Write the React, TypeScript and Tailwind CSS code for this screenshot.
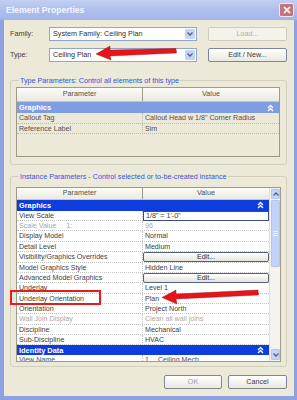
import React from "react";

const FONT = { fontFamily: '"Liberation Sans", Arial, sans-serif' };

const Chevrons: React.FC<{ color?: string }> = ({ color = "#ffffff" }) => (
  <svg width="7" height="8" viewBox="0 0 7 8">
    <path d="M1 4 L3.5 1.5 L6 4" stroke={color} strokeWidth="1.3" fill="none" />
    <path d="M1 7 L3.5 4.5 L6 7" stroke={color} strokeWidth="1.3" fill="none" />
  </svg>
);

const Combo: React.FC<{ text: string }> = ({ text }) => (
  <div className="flex h-[14px] w-[148px] border border-[#8fa6c6] bg-white">
    <div className="flex-1 pl-[3px] text-[7.2px] leading-[12px] text-[#303030]">{text}</div>
    <div className="m-[1px] flex w-[10px] items-center justify-center rounded-[1px] bg-[#c4d3f6]">
      <svg width="6" height="4" viewBox="0 0 6 4">
        <path d="M0.5 0.5 L3 3 L5.5 0.5" stroke="#4d6185" strokeWidth="1.3" fill="none" />
      </svg>
    </div>
  </div>
);

const Btn: React.FC<{ text: string; disabled?: boolean; w: string }> = ({ text, disabled, w }) => (
  <div
    className={`${w} flex h-[14px] items-center justify-center rounded-[2px] border text-[7.2px] ${
      disabled
        ? "border-[#cfccbd] bg-[#f3f2ec] text-[#b4b1a4]"
        : "border-[#7b8696] bg-gradient-to-b from-white to-[#eae8de] text-[#404040]"
    }`}
  >
    {text}
  </div>
);

type Row = { p: string; v?: string; extra?: string; dim?: boolean; btn?: boolean; box?: boolean };

const instanceRows: Row[] = [
  { p: "View Scale", v: "1/8\" = 1'-0\"", box: true },
  { p: "Scale Value", extra: "1:", v: "96", dim: true },
  { p: "Display Model", v: "Normal" },
  { p: "Detail Level", v: "Medium" },
  { p: "Visibility/Graphics Overrides", v: "Edit...", btn: true },
  { p: "Model Graphics Style", v: "Hidden Line" },
  { p: "Advanced Model Graphics", v: "Edit...", btn: true },
  { p: "Underlay", v: "Level 1" },
  { p: "Underlay Orientation", v: "Plan" },
  { p: "Orientation", v: "Project North" },
  { p: "Wall Join Display", v: "Clean all wall joins", dim: true },
  { p: "Discipline", v: "Mechanical" },
  { p: "Sub-Discipline", v: "HVAC" },
];

const Header: React.FC<{ h: string; cols: string }> = ({ h, cols }) => (
  <div className={`grid ${cols} ${h} border-b border-[#c9c6b6] bg-gradient-to-b from-[#fbfbf8] to-[#ebeadf] text-[7.2px] text-[#505050]`}>
    <div className="flex items-center justify-center border-r border-[#9a9889]">Parameter</div>
    <div className="flex items-center justify-center">Value</div>
  </div>
);

const GroupRow: React.FC<{ label: string; bg: string; h: string }> = ({ label, bg, h }) => (
  <div className={`flex ${h} items-center justify-between ${bg} pl-[2px] pr-[5px] text-[7.4px] font-bold text-white`}>
    <span>{label}</span>
    <Chevrons />
  </div>
);

export default function App() {
  return (
    <div className="relative flex h-[400px] w-[297px] flex-col bg-[#8ea2e2]" style={FONT}>
      {/* title bar */}
      <div className="flex h-[20px] items-center justify-between bg-gradient-to-b from-[#c3d0f2] via-[#aebfee] to-[#a3b5e8] pl-[6px] pr-[3px]">
        <span className="text-[8.6px] font-bold text-[#f4f6fc]">Element Properties</span>
        <div className="flex h-[14px] w-[15px] items-center justify-center rounded-[2px] border border-[#e8eaf4] bg-[#c9727a]">
          <svg width="8" height="8" viewBox="0 0 8 8">
            <path d="M1 1 L7 7 M7 1 L1 7" stroke="#ffffff" strokeWidth="1.7" />
          </svg>
        </div>
      </div>

      {/* body */}
      <div className="mb-[4px] ml-[4px] mr-[3px] flex flex-1 flex-col bg-[#ece9d8] pl-[6px] pr-[7px] text-[#404040]">
        <div className="mt-[7px] flex h-[14px] items-center">
          <span className="w-[39px] text-[7.2px]">Family:</span>
          <Combo text="System Family: Ceiling Plan" />
          <div className="ml-[11px]">
            <Btn text="Load..." disabled w="w-[79px]" />
          </div>
        </div>
        <div className="mt-[7px] flex h-[14px] items-center">
          <span className="w-[39px] text-[7.2px]">Type:</span>
          <Combo text="Ceiling Plan" />
          <div className="ml-[11px]">
            <Btn text="Edit / New..." w="w-[79px]" />
          </div>
        </div>

        {/* type parameters */}
        <fieldset className="mt-[14px] rounded-[3px] border border-[#d3d0bf] pb-[7px] pl-[5px] pr-[6px] pt-[2px]">
          <legend className="ml-[3px] px-[1px] text-[7.2px] leading-[9px] text-[#3653d8]">
            Type Parameters: Control all elements of this type
          </legend>
          <div className="h-[70px] w-[264px] border border-[#9c9a8c] bg-[#ece9d8]">
            <Header h="h-[14px]" cols="grid-cols-[126px_1fr]" />
            <GroupRow label="Graphics" bg="bg-[#7f9de2]" h="h-[11px]" />
            {[
              ["Callout Tag", "Callout Head w 1/8\" Corner Radius"],
              ["Reference Label", "Sim"],
            ].map(([p, v]) => (
              <div key={p} className="grid h-[10.5px] grid-cols-[126px_1fr] border-b border-dotted border-[#bdbab0] text-[7.1px] leading-[10px] text-[#505050]">
                <div className="border-r border-dotted border-[#bdbab0] pl-[2px]">{p}</div>
                <div className="pl-[2px]">{v}</div>
              </div>
            ))}
          </div>
        </fieldset>

        {/* instance parameters */}
        <fieldset className="mt-[7px] rounded-[3px] border border-[#d3d0bf] pb-[4px] pl-[5px] pr-[5px] pt-[6px]">
          <legend className="ml-[3px] px-[1px] text-[7.2px] leading-[9px] text-[#3653d8]">
            Instance Parameters - Control selected or to-be-created instance
          </legend>
          <div className="flex h-[175px] w-[265px] border border-[#9c9a8c] bg-white">
            <div className="flex w-[252px] flex-col overflow-hidden">
              <Header h="h-[12px]" cols="grid-cols-[126px_1fr]" />
              <GroupRow label="Graphics" bg="bg-[#0d3ddc]" h="h-[11px]" />
              {instanceRows.map((r) => (
                <div
                  key={r.p}
                  className={`grid h-[10.35px] shrink-0 grid-cols-[126px_1fr] border-b border-dotted border-[#c4c4c4] text-[7.1px] leading-[10px] ${
                    r.dim ? "text-[#a8a8a8]" : "text-[#404040]"
                  }`}
                >
                  <div className="flex border-r border-dotted border-[#c4c4c4] pl-[2px]">
                    <span>{r.p}</span>
                    {r.extra && <span className="ml-[10px]">{r.extra}</span>}
                  </div>
                  {r.btn ? (
                    <div className="flex items-center justify-center rounded-[2px] border border-[#56607a] bg-gradient-to-b from-white to-[#e6e4dc] leading-[8px] text-[#303030]">
                      {r.v}
                    </div>
                  ) : r.box ? (
                    <div className="border border-[#3d4c7a] pl-[2px] leading-[8px]">{r.v}</div>
                  ) : (
                    <div className="pl-[2px]">{r.v}</div>
                  )}
                </div>
              ))}
              <GroupRow label="Identity Data" bg="bg-[#0d3ddc]" h="h-[10px] shrink-0" />
              <div className="grid h-[10px] shrink-0 grid-cols-[126px_1fr] text-[7.1px] leading-[10px] text-[#505050]">
                <div className="border-r border-dotted border-[#c4c4c4] pl-[2px]">View Name</div>
                <div className="pl-[2px]">
                  <span>1</span>
                  <span className="ml-[9px]">Ceiling Mech</span>
                </div>
              </div>
            </div>
            {/* scrollbar */}
            <div className="flex w-[11px] flex-col border-l border-[#e0dfd8] bg-[#f4f3ee] pt-[1px] pl-[1px]">
              <div className="flex h-[10px] items-center justify-center rounded-[1px] border border-[#b5c6ee] bg-[#c6d5f7]">
                <svg width="6" height="4" viewBox="0 0 6 4">
                  <path d="M0.5 3.5 L3 1 L5.5 3.5" stroke="#4d6185" strokeWidth="1.3" fill="none" />
                </svg>
              </div>
              <div className="mt-[1px] flex h-[67px] flex-col items-center justify-center gap-[1px] rounded-[1px] border border-[#b5c6ee] bg-[#c3d3f8]">
                <div className="h-px w-[5px] bg-[#eef2fc]" />
                <div className="h-px w-[5px] bg-[#eef2fc]" />
                <div className="h-px w-[5px] bg-[#eef2fc]" />
              </div>
              <div className="flex-1" />
              <div className="mb-[1px] flex h-[11px] items-center justify-center rounded-[1px] border border-[#b5c6ee] bg-[#c6d5f7]">
                <svg width="6" height="4" viewBox="0 0 6 4">
                  <path d="M0.5 0.5 L3 3 L5.5 0.5" stroke="#4d6185" strokeWidth="1.3" fill="none" />
                </svg>
              </div>
            </div>
          </div>
        </fieldset>

        <div className="mt-[8px] flex justify-end gap-[6px]">
          <Btn text="OK" w="w-[58px] !text-[#a0a0a0]" />
          <Btn text="Cancel" w="w-[59px]" />
        </div>
      </div>

      {/* annotations */}
      <svg className="pointer-events-none absolute left-0 top-0" width="297" height="400">
        <g fill="#e8141a" stroke="#8c0a0a" strokeWidth="0.4">
          <path d="M110 50 L176 48.5 L176.5 53 L110 56 L111 60 L96 54 L110 46 Z" />
          <path d="M176 294 L258 290 L258.5 295 L176 299 L177 304 L162 297.5 L176 290 Z" />
        </g>
        <rect x="11" y="291" width="89" height="13" fill="none" stroke="#e41c1c" strokeWidth="2" />
      </svg>
    </div>
  );
}
